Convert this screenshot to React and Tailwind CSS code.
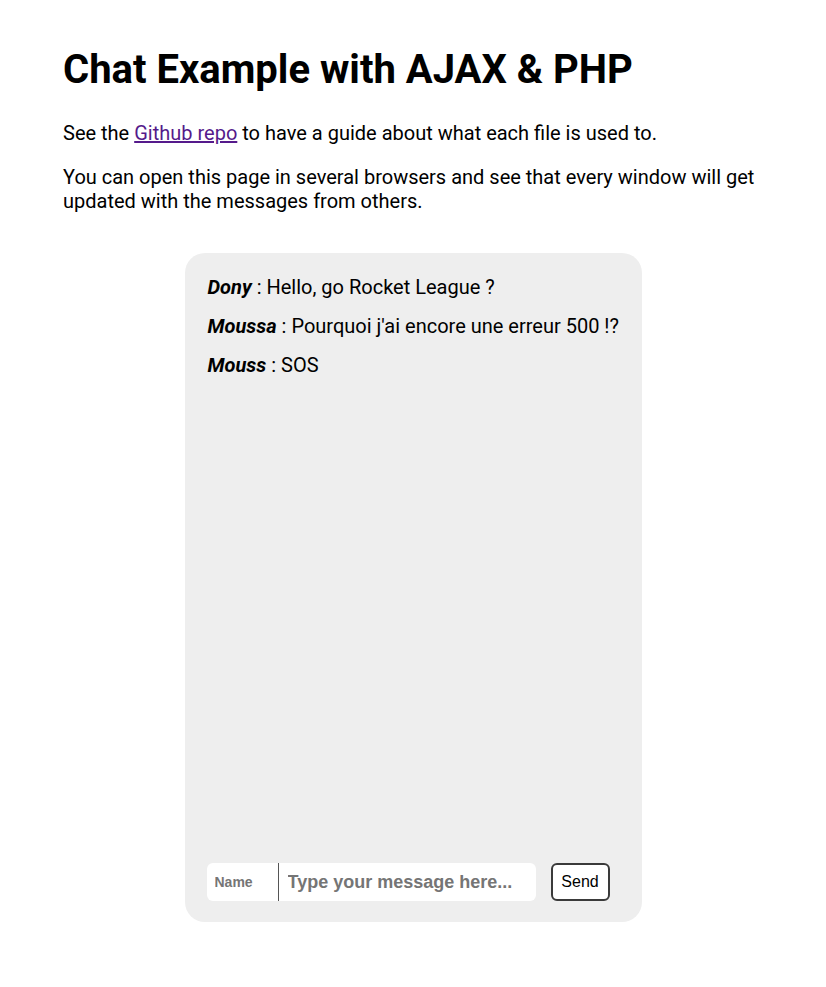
import { useState } from 'react';

const messages = [
  { author: 'Dony', content: 'Hello, go Rocket League ?' },
  { author: 'Moussa', content: "Pourquoi j'ai encore une erreur 500 !?" },
  { author: 'Mouss', content: 'SOS' },
];

const App = () => {
  const [name, setName] = useState('');
  const [text, setText] = useState('');

  return (
    <div className="min-h-[987px] bg-white text-black font-['Roboto',sans-serif] text-[20px] leading-[24px]">
      <div className="max-w-[700px] mx-auto">
        <h1 className="pt-[46px] text-[40px] leading-[47px] font-bold">Chat Example with AJAX &amp; PHP</h1>
        <p className="mt-[28px]">
          See the{' '}
          <a href="#" className="text-[#551a8b] underline">Github repo</a>{' '}
          to have a guide about what each file is used to.
        </p>
        <p className="mt-[20px]">
          You can open this page in several browsers and see that every window will get updated with the messages from others.
        </p>
      </div>

      <div className="w-[457px] h-[669px] mx-auto mt-[40px] bg-[#eeeeee] rounded-[20px] flex flex-col px-[22px] pt-[22px] pb-[21px]">
        <div className="flex-1 pl-px">
          {messages.map((m, i) => (
            <p key={i} className="leading-[24px] mb-[15px]">
              <strong className="italic font-bold">{m.author}</strong> : {m.content}
            </p>
          ))}
        </div>

        <form className="flex items-center gap-[15px]" onSubmit={(e) => e.preventDefault()}>
          <div className="flex h-[38px]">
            <input
              type="text"
              value={name}
              onChange={(e) => setName(e.target.value)}
              placeholder="Name"
              className="w-[72px] h-full bg-white rounded-l-[6px] border-r border-[#555] px-[8px] font-['Liberation_Sans',Arial,sans-serif] text-[14px] font-bold text-black placeholder:text-[#757575] outline-none"
            />
            <input
              type="text"
              value={text}
              onChange={(e) => setText(e.target.value)}
              placeholder="Type your message here..."
              className="w-[257px] h-full bg-white rounded-r-[6px] px-[9px] font-['Liberation_Sans',Arial,sans-serif] text-[18px] font-bold text-black placeholder:text-[#757575] outline-none"
            />
          </div>
          <button
            type="submit"
            className="w-[59px] h-[38px] bg-white border-2 border-[#3a3a3a] rounded-[6px] font-['Liberation_Sans',Arial,sans-serif] text-[16px] text-black"
          >
            Send
          </button>
        </form>
      </div>
    </div>
  );
};

export default App;
